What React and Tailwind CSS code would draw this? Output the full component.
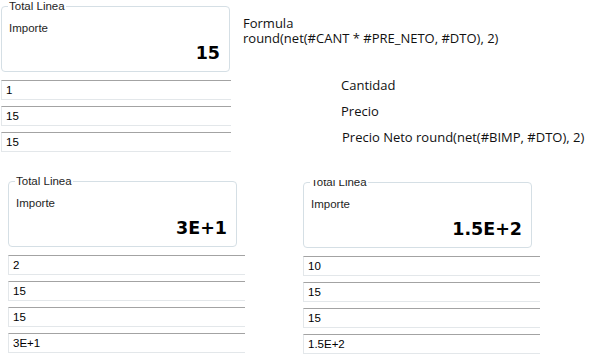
import React from 'react'

const ui = { fontFamily: '"Liberation Sans", Arial, sans-serif' }
const big = { fontFamily: '"DejaVu Sans", Verdana, sans-serif' }
const prose = { fontFamily: '"Open Sans", "Liberation Sans", sans-serif' }

function GroupBox({ value, className = '' }) {
  return (
    <fieldset className={`h-[72px] rounded-[4px] border border-[#d5dfe5] px-[6px] ${className}`}>
      <legend className="px-[1px] text-[11.5px] leading-[12px] text-[#1e1e1e]" style={ui}>
        Total Linea
      </legend>
      <div className="pl-[1px] pt-[10px] text-[11.5px] leading-[13px] text-[#1e1e1e]" style={ui}>
        Importe
      </div>
      <div
        className="mt-[8px] pr-[3px] text-right text-[17.5px] font-bold leading-[20px] text-black"
        style={big}
      >
        {value}
      </div>
    </fieldset>
  )
}

function Field({ value }) {
  return (
    <div
      className="mt-[6px] h-[20px] border-t border-l border-b border-t-[#a3a3a3] border-l-[#e3e7ea] border-b-[#e3e7ea] px-[4px] text-[11.5px] leading-[18px] text-black"
      style={ui}
    >
      {value}
    </div>
  )
}

function Panel({ value, fields, className = '' }) {
  return (
    <div className={className}>
      <GroupBox value={value} className="w-[229px]" />
      <div className="pt-[2px]">
        {fields.map((f, i) => (
          <Field key={i} value={f} />
        ))}
      </div>
    </div>
  )
}

export default function App() {
  return (
    <div className="h-[362px] w-[602px] overflow-hidden bg-white">
      {/* top row */}
      <div className="flex h-[152px] items-start">
        <Panel value="15" fields={['1', '15', '15']} className="ml-[1px] w-[230px]" />

        <div className="pl-[12px] text-[13px] leading-[15px] text-[#111]" style={prose}>
          <div className="pt-[16px]">Formula</div>
          <div>round(net(#CANT * #PRE_NETO, #DTO), 2)</div>
          <div className="pl-[98px] pt-[32px]">
            <div className="h-[26px] leading-[15px]">Cantidad</div>
            <div className="h-[26px] leading-[15px]">Precio</div>
            <div className="ml-[1px] h-[15px] whitespace-nowrap">Precio Neto round(net(#BIMP, #DTO), 2)</div>
          </div>
        </div>
      </div>

      {/* bottom row */}
      <div className="mt-[23px] flex items-start">
        <Panel value="3E+1" fields={['2', '15', '15', '3E+1']} className="ml-[8px] w-[237px]" />
        <div className="ml-[58px] mt-[5px] w-[237px] overflow-hidden">
          <div className="-mt-[4px]">
            <Panel value="1.5E+2" fields={['10', '15', '15', '1.5E+2']} />
          </div>
        </div>
      </div>
    </div>
  )
}
